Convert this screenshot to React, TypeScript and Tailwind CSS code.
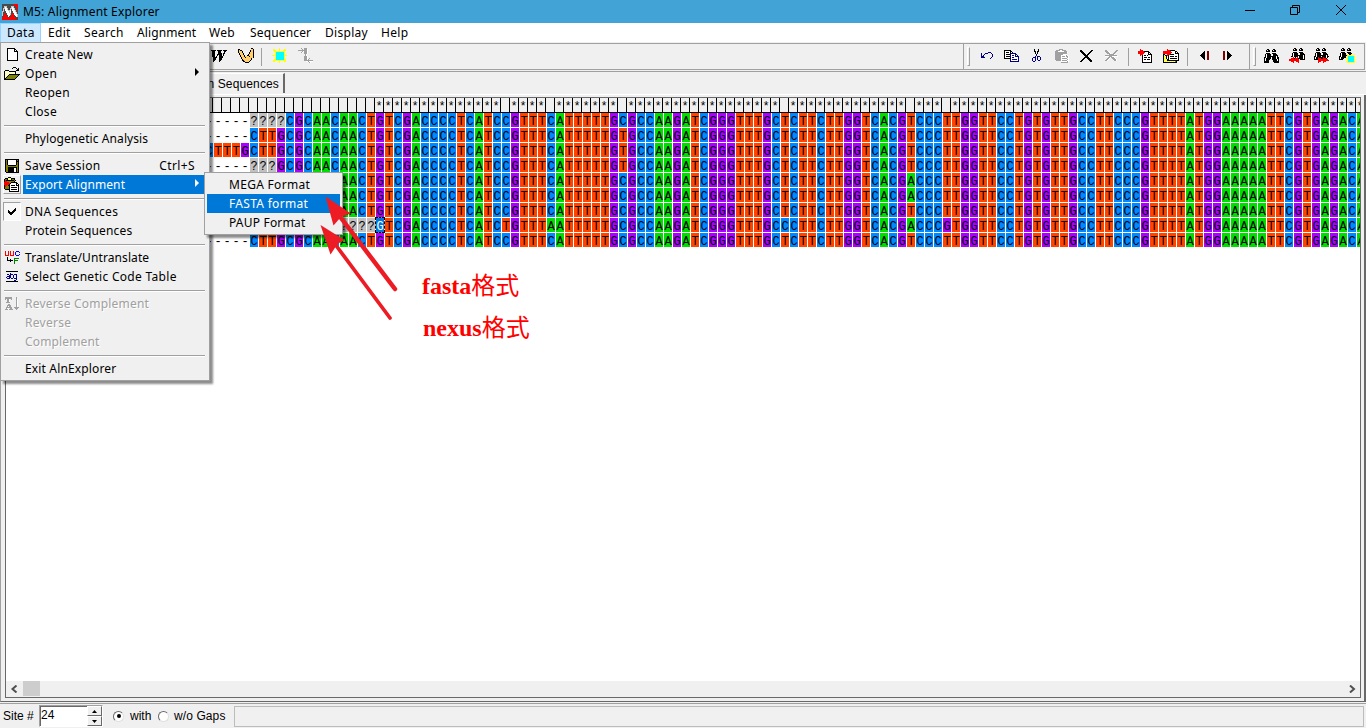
import React from "react";

const PALETTE: Record<string, string> = {
  "#": "#000000",
  w: "#ffffff",
  r: "#ff0000",
  d: "#800000",
  b: "#000080",
  g: "#a0a0a0",
  y: "#ffff00",
  o: "#808000",
  p: "#ffff99",
  c: "#00ffff",
  k: "#4a4a4a",
  s: "#ffcf6b",
  l: "#c8c8c8",
  u: "#0000ff",
  n: "#008000",
};

function Pix({ rows }: { rows: string[] }) {
  const w = Math.max(...rows.map((r) => r.length));
  const runs: React.ReactNode[] = [];
  rows.forEach((row, y) => {
    let x = 0;
    while (x < row.length) {
      const ch = row[x];
      let e = x + 1;
      while (e < row.length && row[e] === ch) e++;
      if (PALETTE[ch]) {
        runs.push(<rect key={`${x}-${y}`} x={x} y={y} width={e - x} height={1} fill={PALETTE[ch]} />);
      }
      x = e;
    }
  });
  return (
    <svg width={w} height={rows.length} viewBox={`0 0 ${w} ${rows.length}`} shapeRendering="crispEdges" className="block shrink-0">
      {runs}
    </svg>
  );
}

const APP = [
  "kkkkkkkkkkkrrrrr",
  "kkkkkkkkkkkkrrrr",
  "kklllkkkklllkkrr",
  "kklwlkkkklwlkkrr",
  "kllwwlkkllwwlkkr",
  "klkwwlkklkwwlkkr",
  "klkwwwllwkwwwlkr",
  "llkkwwwlwkkwwlkk",
  "lkkkwwwlwkkwwwlk",
  "lkrkkwwwlkrkwwlk",
  "lkrrkwwwlkrrwwwl",
  "lkrrrkwwkrrrkwwl",
  "krrrrkwkkrrrkkwl",
  "krrrrrkrrrrrrkkk",
  "rrrrrrrrrrrrrrkk",
  "rrrrrrrrrrrrrrrk",
];
const NEW = [
  "########...",
  "#wwwwww##..",
  "#wwwwww#w#.",
  "#wwwwww####",
  "#wwwwwwwww#",
  "#wwwwwwwww#",
  "#wwwwwwwww#",
  "#wwwwwwwww#",
  "#wwwwwwwww#",
  "#wwwwwwwww#",
  "#wwwwwwwww#",
  "#wwwwwwwww#",
  "###########",
];
const OPEN = [
  ".........###....",
  "........#...#.#.",
  ".............##.",
  ".####.......###.",
  "#pwpw#######....",
  "#wpwpwpwpwp#....",
  "#pwpwpwpwpw#....",
  "#wpwp###########",
  "#pwp#ooooooooo#.",
  "#wp#ooooooooo#..",
  "#p#ooooooooo#...",
  "##ooooooooo#....",
  "###########.....",
];
const SAVE = [
  "##############",
  "#o#wwwwwwww#o#",
  "#o#wwwwwwww###",
  "#o#wwwwwwww#o#",
  "#o#wwwwwwww#o#",
  "#o#wwwwwwww#o#",
  "#oo########oo#",
  "#oooooooooooo#",
  "#oo#########o#",
  "#oo######ww#o#",
  "#oo######ww#o#",
  "#oo######ww#o#",
  "#oo######ww#o#",
  ".#############",
];
const EXPORT = [
  "....###.........",
  ".###ppp####.....",
  "#oo#ppp#oo#.....",
  "#r########o#....",
  "#rrooooooo#.....",
  "rrrrroo######...",
  "rrrrrr#wwwww##..",
  "rrrrr#wwwwww#w#.",
  "#rro##w####w###.",
  "#rooo#wwwwwwww#.",
  "#oooo#w######w#.",
  "#oooo#wwwwwwww#.",
  ".#####w######w#.",
  ".....#wwwwwwww#.",
  ".....##########.",
];
const UUC = [
  "r..r.r..r..uuu.",
  "r..r.r..r.u...u",
  "r..r.r..r.u....",
  "r..r.r..r.u...u",
  "rrrr.rrrr..uuu.",
  "...............",
  "..#............",
  "..#......nnnnn.",
  "..#..#...n.....",
  "..######.nnnn..",
  ".....#...n.....",
  ".........n.....",
  ".........n.....",
];
const ATG = [
  "############",
  "............",
  "....b.......",
  ".bb.bbb.bbb.",
  "...bb..b..b.",
  ".bbbb..b..b.",
  "b..bb..b..b.",
  ".bbb.bb.bbb.",
  "..........b.",
  "........bb..",
  "############",
];
const REVC = [
  "ggggggg....g..",
  "ggggggg....g..",
  "g.ggw.g....gw.",
  "..ggw......gw.",
  "..ggw......gw.",
  ".gggg......gw.",
  "...........gw.",
  "...gg......gw.",
  "..gggg.....gw.",
  "..gwgg.....gw.",
  ".gggggg..ggggg",
  ".gw..gg...ggg.",
  "gggwgggg...g..",
];
const CHECK = [
  ".......#",
  "......##",
  "#....###",
  "##..###.",
  "######..",
  ".####...",
  "..##....",
];
const BIG_W = [
  "#####.#####.####",
  ".###...###...##.",
  ".###...###...#..",
  ".###...####.##..",
  ".###..#####.#...",
  ".###..#.###.#...",
  ".###.#..####....",
  "..####..####....",
  "..###...###.....",
  "..###...###.....",
  "..##....##......",
  "..#.....#.......",
];
const ARM = [
  ".............##.",
  "##...........ss#",
  "#s##........#ss#",
  "#sss#.......#ss#",
  "#sss#......#sss#",
  ".#sss#.....#sss#",
  ".#sss#....#ssss#",
  "..#sss#..##ssss#",
  "..#sss#ssss#sss#",
  "...#sss#sssssss#",
  "...#sssssssss#..",
  "....#ssssssss#..",
  "....##ssssss#...",
  ".....##ssss#....",
  ".......####.....",
];
const SUN = [
  ".......y.......",
  ".yy....y....yy.",
  ".yyy...y...yyy.",
  "..yyyyyyyyyyy..",
  "...yccccccccy..",
  "...yccccccccy..",
  "...yccccccccy..",
  "yyyyccccccccyyy",
  "...yccccccccy..",
  "...yccccccccy..",
  "...yccccccccy..",
  "..yyccccccccyy.",
  ".yyyyyyyyyyyyy.",
  ".yy....y....yy.",
  ".......y.......",
];
const STEP = [
  "...g..ggg......",
  "....g.gggw.....",
  "gggggggggw.....",
  "....gwgggw.....",
  "...gw.gggw.....",
  "......gggw.....",
  ".......gw......",
  ".......gw......",
  "......gggw.....",
  "......gggw.....",
  "......gggw.g...",
  "......gggwg....",
  "......ggggggggg",
  "........wwgwwww",
  "...........gw..",
];
const UNDO = [
  ".......bbb..",
  "b...bbb...b.",
  "b..b.......b",
  "b.b........b",
  "bbb........b",
  "bbbb......b.",
  ".........b..",
];
const COPY = [
  "#######........",
  "#wwwww##.......",
  "#w###w#w#......",
  "#wwwww#bbbbb...",
  "#w####bwwwwbb..",
  "#wwwwwbwbbwbwb.",
  "#w####bwwwwbbbb",
  "#wwwwwbwbbwwwwb",
  "#######wwwwwwwb",
  "......bwbbbbbwb",
  "......bwwwwwwwb",
  "......bbbbbbbbb",
];
const CUT = [
  "..#...#..",
  "..#...#..",
  "..##.##..",
  "...#.#...",
  "...#.#...",
  "....#....",
  "....b....",
  "...b.bbb.",
  ".bbb.b..b",
  "b..b.b..b",
  "b..b.b..b",
  "b..b..bb.",
  ".bb......",
];
const PASTE = [
  "....gggg......",
  ".ggggwwgggg...",
  "gggwwwwwwggg..",
  "ggggggggggggw.",
  "gggggggggggg..",
  "ggggggggwwww..",
  "ggggggwwwwwgw.",
  "ggggggwgggwggw",
  "ggggggwwwwwwgw",
  "ggggggwgggggww",
  "ggggggwwwwwwgw",
  ".gggggwgggggww",
  "......wwwwwwgw",
  "......ggggggg.",
];
const XROWS = [
  "##.........##",
  "###.......##.",
  ".###.....##..",
  "..###...##...",
  "...###.##....",
  "....####.....",
  ".....###.....",
  "....#####....",
  "...##..###...",
  "..##....###..",
  ".##......###.",
  "##........##.",
];
const XGREY = [
  "gg.........gg",
  "gggw......gg.",
  ".gggw....gg..",
  "..gggw..gg...",
  "....gggggw...",
  "gggggggggggg.",
  "wwwwgggwwwwww",
  "...ggwgggw...",
  "..ggw..gggw..",
  ".ggw....gggw.",
  "ggw......ggw.",
];
const DOC_IN = [
  "..r.............",
  "..rrr...........",
  "rrrrrr#####.....",
  "rrrrrrrwww##....",
  "rrrrrrwwww#w#...",
  "..rrrwwwww####..",
  "..r.#w##w#www#..",
  "....#wwwwwwww#..",
  "....#w###w##w#..",
  "....#wwwwwwww#..",
  "....#w##w###w#..",
  "....#wwwwwwww#..",
  "....#wwwwwwww#..",
  "....##########..",
];
const FOLDER_IN = [
  "....r...........",
  "....rrr#####....",
  "rrrrrrrrwwww##..",
  "rrrrrrrrrwww#w#.",
  "rrrrrrrrwwww####",
  "##..rrr####wwww#",
  "#p##r#wwwwwwwww#",
  "#yp#.#w####w##w#",
  "#py#.#wwwwwwwww#",
  "#yp#.#w#######w#",
  "#pyp##wwwwwwwww#",
  "#ypy############",
  "#pypypypypypo#..",
  "##############..",
];
const PREV = ["....#..dd", "...##..dd", "..###..dd", ".####..dd", "#####..dd", ".####..dd", "..###..dd", "...##..dd", "....#..dd"];
const NEXT = ["dd..#....", "dd..##...", "dd..###..", "dd..####.", "dd..#####", "dd..####.", "dd..###..", "dd..##...", "dd..#...."];
const BIN = [
  "...##....##....",
  "..#.##..#.##...",
  "..####..####...",
  "...............",
  "..####..####...",
  ".#w####.w####..",
  ".#w####.w#####.",
  ".#w#########w#.",
  "##w####w####w##",
  "#w#####w####w##",
  "#w####..#####w#",
  "#w###....####w#",
  "#####....######",
  "#####.....#####",
];
const BIN_PREV = [
  ...BIN.slice(0, 9).map((r) => ".." + r.slice(0, 14)),
  "....r.#.rw####w#",
  "..rrr#rrr#####w#",
  "rrrrrrrrrr.#####",
  "rrrrrrrrrr......",
  "..rrr..rrr......",
  "....r....r......",
];
const BIN_NEXT = [
  ...BIN.slice(0, 9).map((r) => r + "."),
  "#w##r####r##w#..",
  "#w##rrr##rrr#...",
  "####rrrrrrrrrr..",
  "....rrrrrrrrrrr.",
  "....rrr..rrr....",
  "....r....r......",
];
const BIN_SUN = [
  ...BIN.slice(0, 6).map((r) => r.slice(0, 13) + "..."),
  ".#w####.yw##y..y",
  ".#w#####yyyyyyy.",
  "##w####.yccccccy",
  "#w#####.yccccccy",
  "#w###..yyccccccy",
  "####....yccccccy",
  "........yccccccy",
  ".......yyccccccy",
  "........yyyyyyyy",
];

function Slot({ rows, w = "w-[25px]" }: { rows: string[]; w?: string }) {
  return (
    <div className={`flex h-[25px] shrink-0 items-center justify-center pb-[2px] ${w}`}>
      <Pix rows={rows} />
    </div>
  );
}

function MenuRow({ label, icon, shortcut, arrow, hot, disabled, checked, tracking = "tracking-[0.3px]" }: {
  label: string;
  icon?: string[];
  shortcut?: string;
  arrow?: boolean;
  hot?: boolean;
  disabled?: boolean;
  checked?: boolean;
  tracking?: string;
}) {
  const tone = disabled ? "text-[#a0a0a0] [text-shadow:1px_1px_0_#fff]" : hot ? "bg-[#0078d7] text-white" : "text-black";
  const well = checked
    ? "bg-[#f8f8f8] border border-t-[#a0a0a0] border-l-[#a0a0a0] border-white"
    : hot
      ? "border border-t-white border-l-white border-[#a0a0a0]"
      : "";
  return (
    <div className="flex h-[19px] items-stretch">
      <div className={`mr-[2px] flex w-[18px] shrink-0 items-center justify-center ${well}`}>{icon && <Pix rows={icon} />}</div>
      <div className={`flex flex-1 items-center justify-between pl-[2px] leading-[19px] ${tone} ${arrow ? "pr-[7px]" : "pr-[11px]"}`}>
        <span className={`whitespace-pre ${tracking}`}>{label}</span>
        {shortcut && <span className="tracking-[0.4px]">{shortcut}</span>}
        {arrow && (
          <svg width="4" height="8" viewBox="0 0 4 8" className="mb-[4px]">
            <path d="M0 0L4 4L0 8Z" fill={hot ? "#fff" : "#000"} />
          </svg>
        )}
      </div>
    </div>
  );
}

function Divider() {
  return (
    <div className="flex h-2 flex-col pt-1 pl-px pr-[1px]">
      <div className="h-px bg-[#a0a0a0]" />
      <div className="h-px bg-white" />
    </div>
  );
}

const HEAD = "CTTGCGCAACAAC";
const BODY =
  "TGTCGACCCCTCATCC" +
  "GTTTCATTTTTGCGCCAAGATCGGGTTTGCT" +
  "CTTCTTGGTCACGTCCCTTGGTTCCTGTGTTG" +
  "CCTTCCCGTTTTATGGAAAAATTCGTGAGACA";

function row(lead: string, head: string, edits: Record<number, string> = {}) {
  const chars = (head + BODY).split("");
  Object.entries(edits).forEach(([i, c]) => (chars[Number(i)] = c));
  return lead + chars.join("");
}

const ROWS = [
  row("-----", "????CGCAACAAC"),
  row("-----", HEAD, { 41: "T" }),
  row("CTTTG", HEAD, { 41: "T" }),
  row("-----", "???GCGCAACAAC", { 41: "T" }),
  row("-----", HEAD, { 73: "A" }),
  row("-----", HEAD, { 73: "A" }),
  row("-----", HEAD),
  row("-----", "?????????????", { 13: "?", 28: "T", 33: "A", 59: "C", 73: "A", 77: "G" }),
  row("-----", HEAD),
];

const FILL: Record<string, string> = {
  A: "bg-[#00dd00]",
  C: "bg-[#0088ff]",
  G: "bg-[#aa00ff]",
  T: "bg-[#ff4400]",
  "?": "bg-[#c0c0c0]",
  "-": "bg-white",
};

const UNSTARRED = new Set([28, 33, 41, 59, 73, 77]);

function Sequences() {
  return (
    <div className="flex flex-1 flex-col overflow-hidden bg-white font-['Liberation_Mono',monospace] text-[12px]">
      <div className="flex h-[15px] shrink-0 border-b border-black bg-[#f0f0f0]">
        <div className="w-[198px] shrink-0 border-r border-black" />
        {Array.from({ length: 129 }, (_, i) => (
          <div key={i} className="h-[14px] w-[9px] shrink-0 border-r border-black pt-[2px] text-center text-[12px] leading-[14px] text-black">
            {i - 5 >= 14 && !UNSTARRED.has(i - 5) ? "*" : ""}
          </div>
        ))}
      </div>
      {ROWS.map((seq, r) => (
        <div key={r} className="flex h-[15px] shrink-0">
          <div className="w-[199px] shrink-0" />
          {seq.split("").map((c, i) => {
            const picked = r === 7 && i === 19;
            return (
              <div
                key={i}
                className={`mr-px flex h-[14px] w-2 shrink-0 justify-center pt-[2px] leading-[15px] ${picked ? "bg-[#0078d7] text-white outline-1 outline-dashed outline-black" : `${FILL[c]} text-black`}`}
              >
                {c}
              </div>
            );
          })}
        </div>
      ))}
    </div>
  );
}

const MENUS: [string, string][] = [
  ["Data", "w-[41px] pl-[6px] bg-[#cce8ff] border border-[#99d1ff] border-b-0"],
  ["Edit", "w-[36px] pl-[7px]"],
  ["Search", "w-[53px] pl-[7px]"],
  ["Alignment", "w-[72px] pl-[7px] tracking-[0.1px]"],
  ["Web", "w-[41px] pl-[7px]"],
  ["Sequencer", "w-[75px] pl-[7px] tracking-[0.15px]"],
  ["Display", "w-[56px] pl-[7px]"],
  ["Help", "w-[50px] pl-[7px]"],
];

export default function App() {
  return (
    <div className="relative flex h-[728px] w-[1366px] flex-col overflow-hidden bg-[#f0f0f0] font-['Noto_Sans',sans-serif] text-[12px] text-black">
      <header className="flex h-[23px] shrink-0 items-center bg-[#41a3d6] pl-[2px]">
        <Pix rows={APP} />
        <span className="ml-[5px] flex-1 tracking-[0.18px]">M5: Alignment Explorer</span>
        <svg width="104" height="12" viewBox="0 0 104 12" fill="none" stroke="#000" className="mb-[3px] mr-[18px]">
          <path d="M1 6.500h10M46.500 3.500h7v7h-7zM48.500 3.500v-2h7v7h-2M92 1l10 10M102 1l-10 10" />
        </svg>
      </header>

      <nav className="flex h-[19px] shrink-0 bg-white">
        {MENUS.map(([name, cls]) => (
          <div key={name} className={`flex shrink-0 items-center whitespace-nowrap ${cls.includes("tracking") ? "" : "tracking-[0.3px]"} ${cls}`}>
            {name}
          </div>
        ))}
      </nav>

      <div className="mr-px mt-px flex h-[27px] shrink-0 items-center border-y border-r border-[#a0a0a0]">
        <div className="w-[205px] shrink-0" />
        <Slot rows={BIG_W} w="w-[27px]" />
        <Slot rows={ARM} w="w-[27px]" />
        <div className="ml-[2px] h-[18px] w-px bg-[#a0a0a0]" />
        <Slot rows={SUN} w="w-[35px]" />
        <Slot rows={STEP} w="w-[16px]" />
        <div className="flex-1" />
        <div className="h-full w-px bg-[#a0a0a0]" />
        <div className="ml-[3px] mr-[4px] h-[19px] w-[3px] border border-white border-r-[#a0a0a0] border-b-[#a0a0a0]" />
        <Slot rows={UNDO} />
        <Slot rows={COPY} />
        <Slot rows={CUT} />
        <Slot rows={PASTE} />
        <Slot rows={XROWS} />
        <Slot rows={XGREY} />
        <div className="ml-[4px] h-[18px] w-px bg-[#a0a0a0]" />
        <Slot rows={DOC_IN} w="w-[33px]" />
        <Slot rows={FOLDER_IN} w="w-[18px]" />
        <div className="ml-[7px] h-[18px] w-px bg-[#a0a0a0]" />
        <Slot rows={PREV} w="w-[33px]" />
        <Slot rows={NEXT} w="w-[13px]" />
        <div className="ml-[15px] h-full w-px bg-[#a0a0a0]" />
        <div className="ml-[3px] mr-[3px] h-[19px] w-[3px] border border-white border-r-[#a0a0a0] border-b-[#a0a0a0]" />
        <Slot rows={BIN} />
        <Slot rows={BIN_PREV} />
        <Slot rows={BIN_NEXT} />
        <Slot rows={BIN_SUN} />
        <div className="w-[5px]" />
      </div>

      <div className="mt-px flex h-[24px] shrink-0 items-end border-b border-b-white border-t border-t-[#a0a0a0] font-['Liberation_Sans',sans-serif]">
        <div className="mb-px flex h-[20px] w-[285px] items-center justify-end border-r-2 border-t border-r-[#696969] border-t-white pr-[4px] text-[12px] tracking-[0.14px]">
          Translated Protein Sequences
        </div>
      </div>

      <div className="flex h-[607px] shrink-0 flex-col border-b border-l border-r-2 border-[#696969] border-l-[#a0a0a0] pb-[3px] pl-[4px] pr-[3px] pt-[2px]">
        <div className="flex flex-1 flex-col border border-[#696969] overflow-hidden">
          <Sequences />
          <div className="flex h-[16px] shrink-0 items-center bg-[#f0f0f0] px-[4px] pb-px">
            <svg width="8" height="8" viewBox="0 0 8 8" fill="none" stroke="#505050" strokeWidth="2">
              <path d="M6.500 0.500L2.500 4L6.500 7.500" />
            </svg>
            <div className="ml-[5px] h-[15px] w-[17px] bg-[#cdcdcd]" />
            <div className="flex-1" />
            <svg width="8" height="8" viewBox="0 0 8 8" fill="none" stroke="#505050" strokeWidth="2">
              <path d="M2 0.500L6 4L2 7.500" />
            </svg>
          </div>
        </div>
      </div>

      <footer className="mt-px flex flex-1 items-center border-t border-[#a0a0a0] pl-[3px] font-['Liberation_Sans',sans-serif] text-[12px]">
        <span className="w-[36px] shrink-0">Site #</span>
        <div className="flex h-[22px] w-[64px] shrink-0 border border-[#a0a0a0] border-b-white border-r-white bg-white">
          <span className="flex-1 border-l border-t border-[#696969] leading-[17px]">24</span>
          <div className="flex w-[15px] flex-col bg-[#f0f0f0]">
            {["M0 3L2.500 0L5 3Z", "M0 0L2.500 3L5 0Z"].map((d) => (
              <div key={d} className="flex flex-1 items-center justify-center border border-b-[#696969] border-l-white border-r-[#696969] border-t-white">
                <svg width="5" height="3" viewBox="0 0 5 3">
                  <path d={d} />
                </svg>
              </div>
            ))}
          </div>
        </div>
        <div className="ml-[10px] flex size-[11px] shrink-0 items-center justify-center rounded-full border border-[#e0e0e0] border-l-[#696969] border-t-[#696969] bg-white">
          <div className="size-[4px] rounded-full bg-black" />
        </div>
        <span className="ml-[6px] w-[28px]">with</span>
        <div className="size-[11px] shrink-0 rounded-full border border-[#e0e0e0] border-l-[#696969] border-t-[#696969] bg-white" />
        <span className="ml-[5px] w-[60px] whitespace-nowrap tracking-[0.1px]">w/o Gaps</span>
        <div className="mr-[2px] h-[21px] flex-1 border border-[#bcbcbc]" />
      </footer>

      <div className="absolute left-0 top-[42px] w-[210px] border border-[#a0a0a0] bg-[#f0f0f0] py-[2px] pl-[2px] pr-[3px] shadow-[3px_3px_2px_rgba(0,0,0,0.45)]">
        <MenuRow label="Create New" icon={NEW} />
        <MenuRow label="Open" icon={OPEN} arrow />
        <MenuRow label="Reopen" />
        <MenuRow label="Close" />
        <Divider />
        <MenuRow label="Phylogenetic Analysis" tracking="tracking-[0.08px]" />
        <Divider />
        <MenuRow label="Save Session" icon={SAVE} shortcut="Ctrl+S" />
        <MenuRow label="Export Alignment" icon={EXPORT} arrow hot tracking="tracking-[0.1px]" />
        <Divider />
        <MenuRow label="DNA Sequences" icon={CHECK} checked />
        <MenuRow label="Protein Sequences" tracking="tracking-[0.16px]" />
        <Divider />
        <MenuRow label="Translate/Untranslate" icon={UUC} tracking="tracking-[0.1px]" />
        <MenuRow label="Select Genetic Code Table" icon={ATG} />
        <Divider />
        <MenuRow label="Reverse Complement" icon={REVC} disabled tracking="tracking-[0.2px]" />
        <MenuRow label="Reverse" disabled />
        <MenuRow label="Complement" disabled tracking="tracking-[0.15px]" />
        <Divider />
        <MenuRow label="Exit AlnExplorer" tracking="tracking-[0.15px]" />
      </div>

      <div className="absolute left-[204px] top-[172px] w-[139px] border border-[#a0a0a0] bg-[#f0f0f0] p-[2px] leading-[19px] tracking-[0.3px] shadow-[3px_3px_2px_rgba(0,0,0,0.45)]">
        <div className="h-[19px] pl-[22px]">MEGA Format</div>
        <div className="h-[19px] bg-[#0078d7] pl-[22px] text-white">FASTA format</div>
        <div className="h-[19px] pl-[22px] tracking-[0.2px]">PAUP Format</div>
      </div>

      <svg className="absolute left-[310px] top-[185px]" width="100" height="145" viewBox="0 0 100 145" fill="#ed1c24" stroke="#ed1c24" strokeLinecap="round">
        <path d="M15.500 11.500L41 28.500L33 31L30 33L23.500 40.500Z" stroke="none" />
        <path d="M28 29L85 104" strokeWidth="4.500" />
        <path d="M10.500 40L34.500 55L27.500 59L20.500 69.500Z" stroke="none" />
        <path d="M22 55L80 133" strokeWidth="3.700" />
      </svg>

      <div className="absolute left-[422px] top-[270px] flex flex-col whitespace-nowrap font-['Liberation_Serif','Noto_Sans_CJK_SC',serif] text-[24px] font-bold leading-[42px] text-[#ff0000]">
        <span className="h-[42px] -translate-y-[5px]">
          fasta<span className="font-normal">格式</span>
        </span>
        <span className="h-[42px] -translate-y-[5px] pl-px">
          nexus<span className="font-normal">格式</span>
        </span>
      </div>
    </div>
  );
}
